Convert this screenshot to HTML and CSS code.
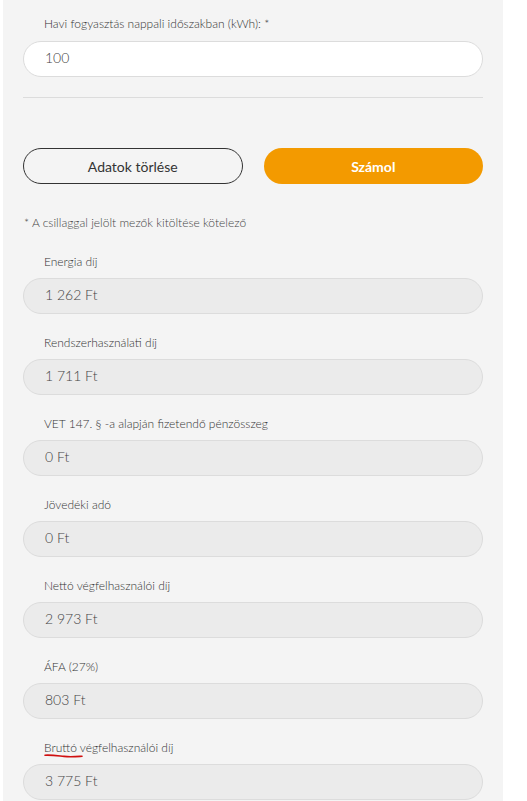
FILE: index.html
```html
<!DOCTYPE html>
<html lang="hu">
<head>
<meta charset="utf-8">
<link rel="stylesheet" href="styles.css">
</head>
<body>
<div class="panel">
  <div class="field first">
    <div class="label">Havi fogyasztás nappali időszakban (kWh): *</div>
    <div class="input">100</div>
  </div>
  <div class="divider"></div>
  <div class="buttons">
    <button class="btn btn-outline">Adatok törlése</button>
    <button class="btn btn-primary">Számol</button>
  </div>
  <div class="note">* A csillaggal jelölt mezők kitöltése kötelező</div>
  <div class="results">
    <div class="field">
      <div class="label">Energia díj</div>
      <div class="output">1 262 Ft</div>
    </div>
    <div class="field">
      <div class="label">Rendszerhasználati díj</div>
      <div class="output">1 711 Ft</div>
    </div>
    <div class="field">
      <div class="label">VET 147. § -a alapján fizetendő pénzösszeg</div>
      <div class="output">0 Ft</div>
    </div>
    <div class="field">
      <div class="label">Jövedéki adó</div>
      <div class="output">0 Ft</div>
    </div>
    <div class="field">
      <div class="label">Nettó végfelhasználói díj</div>
      <div class="output">2 973 Ft</div>
    </div>
    <div class="field">
      <div class="label">ÁFA (27%)</div>
      <div class="output">803 Ft</div>
    </div>
    <div class="field">
      <div class="label"><span class="marked">Bruttó<svg class="scribble" width="40" height="6" viewBox="0 0 40 6"><path d="M1 2.2 C8 1.8 14 2.8 20 3.4 C27 4.1 32 3.6 38 3.2" stroke="#d01010" stroke-width="1.6" fill="none" stroke-linecap="round"/></svg></span> végfelhasználói díj</div>
      <div class="output">3 775 Ft</div>
    </div>
  </div>
</div>
</body>
</html>
```

FILE: styles.css
```css
html, body {
  margin: 0;
  padding: 0;
  background: #ffffff;
}
body {
  font-family: "Lato", "Open Sans", sans-serif;
  color: #333;
}
.panel {
  margin-left: 3px;
  width: 500px;
  box-sizing: border-box;
  background: #f4f4f4;
  padding: 16px 20px 0 20px;
  min-height: 801px;
}
.label {
  font-size: 12px;
  line-height: 16px;
  font-weight: 300;
  color: #333;
  padding-left: 21px;
  margin-bottom: 8px;
}
.first .label {
  margin-bottom: 9px;
}
.input, .output {
  height: 36px;
  box-sizing: border-box;
  border-radius: 18px;
  border: 1px solid #dcdcdc;
  padding-left: 21px;
  font-size: 14px;
  font-weight: 300;
  line-height: 32px;
  color: #444;
}
.input {
  background: #fff;
}
.output {
  background: #ebebeb;
}
.divider {
  margin-top: 20px;
  height: 1px;
  background: #dcdcdc;
}
.buttons {
  margin-top: 50px;
  display: grid;
  grid-template-columns: 1fr 1fr;
  gap: 21px;
}
.btn {
  height: 36px;
  box-sizing: border-box;
  border-radius: 18px;
  font-family: inherit;
  font-size: 14px;
  cursor: pointer;
}
.btn-outline {
  background: transparent;
  border: 1px solid #333;
  color: #333;
}
.btn-primary {
  background: #f39a00;
  border: none;
  color: #fff;
  font-weight: bold;
}
.note {
  margin-top: 31px;
  font-size: 12px;
  line-height: 16px;
  font-weight: 300;
  color: #444;
  padding-left: 1px;
}
.results {
  margin-top: 23px;
  display: flex;
  flex-direction: column;
  gap: 21px;
}
.marked {
  position: relative;
}
.scribble {
  position: absolute;
  left: 0;
  top: 13px;
}
```
